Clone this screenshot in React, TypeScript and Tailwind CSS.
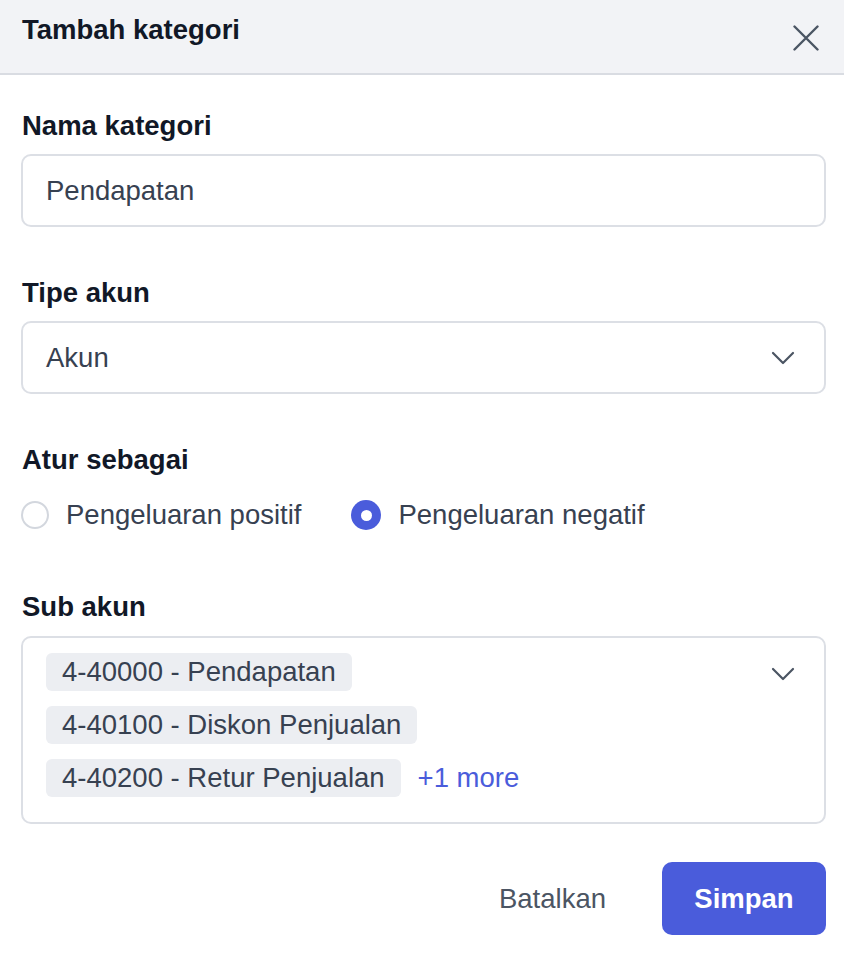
import { useState } from "react";

const SUB_ACCOUNTS = [
  "4-40000 - Pendapatan",
  "4-40100 - Diskon Penjualan",
  "4-40200 - Retur Penjualan",
];

function CloseIcon() {
  return (
    <svg width="26" height="26" viewBox="0 0 26 26" fill="none">
      <path
        d="M1.5 1.5L24.5 24.5M24.5 1.5L1.5 24.5"
        stroke="#4b5563"
        strokeWidth="2.4"
        strokeLinecap="round"
      />
    </svg>
  );
}

function ChevronDown() {
  return (
    <svg width="24" height="14" viewBox="0 0 24 14" fill="none">
      <path
        d="M2 2L12 12L22 2"
        stroke="#4b5563"
        strokeWidth="2.2"
        strokeLinecap="round"
        strokeLinejoin="round"
      />
    </svg>
  );
}

function Radio({
  checked,
  label,
  onClick,
}: {
  checked: boolean;
  label: string;
  onClick: () => void;
}) {
  return (
    <button type="button" onClick={onClick} className="flex items-center gap-[17px]">
      {checked ? (
        <span className="flex h-[30px] w-[30px] items-center justify-center rounded-full bg-[#4a5cdb]">
          <span className="h-[11px] w-[11px] rounded-full bg-white" />
        </span>
      ) : (
        <span className="h-[28px] w-[28px] rounded-full border-2 border-[#d3d7de] bg-white" />
      )}
      <span className="text-[#374151]">{label}</span>
    </button>
  );
}

export default function App() {
  const [mode, setMode] = useState<"positif" | "negatif">("negatif");

  return (
    <div
      className="min-h-[962px] w-[844px] bg-white text-[27.5px] leading-[32px] text-[#111827]"
      style={{ fontFamily: '"Liberation Sans", Arial, sans-serif' }}
    >
      <header className="flex h-[75px] items-start justify-between border-b-2 border-[#d9dce2] bg-[#f2f3f6] pl-[22px] pr-[25px]">
        <h2 className="mt-[14px] font-bold">Tambah kategori</h2>
        <button type="button" className="mt-[25px]" aria-label="Tutup">
          <CloseIcon />
        </button>
      </header>

      <div className="flex flex-col pl-[21px] pr-[18px] pt-[35px]">
        <label className="pl-[1px] font-bold">Nama kategori</label>
        <div className="mt-[12px] flex h-[73px] items-center rounded-[10px] border-2 border-[#dcdfe5] px-[23px] text-[#374151]">
          Pendapatan
        </div>

        <label className="mt-[50px] pl-[1px] font-bold">Tipe akun</label>
        <div className="mt-[12px] flex h-[73px] items-center justify-between rounded-[10px] border-2 border-[#dcdfe5] pl-[23px] pr-[29px] text-[#374151]">
          <span>Akun</span>
          <ChevronDown />
        </div>

        <label className="mt-[50px] pl-[1px] font-bold">Atur sebagai</label>
        <div className="mt-[23px] flex items-center gap-[50px]">
          <Radio
            checked={mode === "positif"}
            label="Pengeluaran positif"
            onClick={() => setMode("positif")}
          />
          <Radio
            checked={mode === "negatif"}
            label="Pengeluaran negatif"
            onClick={() => setMode("negatif")}
          />
        </div>

        <label className="mt-[60px] pl-[1px] font-bold">Sub akun</label>
        <div className="mt-[13px] flex h-[188px] items-start justify-between rounded-[10px] border-2 border-[#dcdfe5] pb-[20px] pl-[23px] pr-[29px] pt-[15px]">
          <div className="flex flex-col gap-[15px] text-[#374151]">
            {SUB_ACCOUNTS.map((item, i) => (
              <div key={item} className="flex items-center gap-[17px]">
                <span className="flex h-[38px] items-center rounded-[6px] bg-[#eceef2] px-[16px]">
                  {item}
                </span>
                {i === SUB_ACCOUNTS.length - 1 && (
                  <span className="text-[#4a5cdb]">+1 more</span>
                )}
              </div>
            ))}
          </div>
          <div className="mt-[14px]">
            <ChevronDown />
          </div>
        </div>

        <div className="mt-[38px] flex items-center justify-end gap-[56px]">
          <button type="button" className="text-[#4b5563]">
            Batalkan
          </button>
          <button
            type="button"
            className="flex h-[73px] w-[164px] items-center justify-center rounded-[10px] bg-[#4a5cdb] font-bold text-white"
          >
            Simpan
          </button>
        </div>
      </div>
    </div>
  );
}
